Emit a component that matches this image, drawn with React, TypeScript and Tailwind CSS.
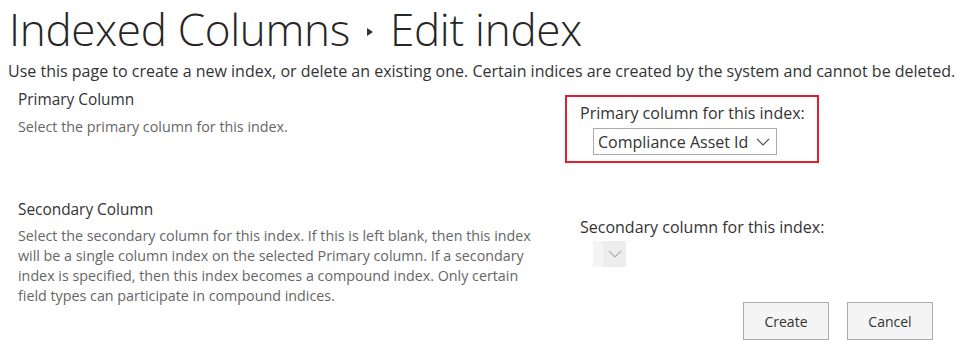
import React from "react";

const font = { fontFamily: '"Open Sans", "Noto Sans", sans-serif' };

function Chevron({ className = "" }: { className?: string }) {
  return (
    <svg width="14" height="8" viewBox="0 0 14 8" className={className}>
      <path d="M1 1 L7 7 L13 1" fill="none" stroke="currentColor" strokeWidth="1.1" />
    </svg>
  );
}

export default function App() {
  return (
    <div className="w-[969px] h-[359px] bg-white text-[#333] overflow-hidden" style={font}>
      <h1 className="pl-[9px] pt-[2px] h-[56px] text-[44px] leading-[56px] font-light text-[#262626] tracking-[-0.3px] flex items-center whitespace-nowrap">
        <span>Indexed Columns</span>
        <svg width="8" height="10" viewBox="0 0 8 10" className="mx-[16px] mt-[6px]">
          <path d="M1 1 L7 5 L1 9 Z" fill="#333" />
        </svg>
        <span>Edit index</span>
      </h1>
      <p className="pl-[8px] pt-[3px] text-[16px] leading-[24px] text-[#333] whitespace-nowrap">
        Use this page to create a new index, or delete an existing one. Certain indices are created by the system and cannot be deleted.
      </p>
      <div className="flex pl-[18px]">
        <div className="w-[547px]">
          <div className="pt-[6px] text-[15.4px] leading-[22px] text-[#333]">Primary Column</div>
          <div className="mt-[6px] text-[14.3px] leading-[20px] text-[#666]">Select the primary column for this index.</div>
          <div className="mt-[62px] text-[15.4px] leading-[22px] text-[#333]">Secondary Column</div>
          <div className="mt-[5px] w-[522px] text-[14.3px] leading-[20px] text-[#666]">
            Select the secondary column for this index. If this is left blank, then this index will be a single column index on the selected Primary column. If a secondary index is specified, then this index becomes a compound index. Only certain field types can participate in compound indices.
          </div>
        </div>
        <div className="flex flex-col">
          <div className="mt-[12px] w-[254px] h-[68px] border-2 border-[#e0202e] pl-[13px] pt-[6px]">
            <div className="text-[16px] leading-[20px] text-[#333] whitespace-nowrap">Primary column for this index:</div>
            <div className="ml-[13px] mt-[5px] w-[184px] h-[27px] border border-[#ababab] flex items-center justify-between pl-[4px] pr-[6px] text-[16px] text-[#333]">
              <span>Compliance Asset Id</span>
              <Chevron className="text-[#555]" />
            </div>
          </div>
          <div className="mt-[54px] pl-[15px] text-[16px] leading-[20px] text-[#333] whitespace-nowrap">Secondary column for this index:</div>
          <div className="ml-[28px] mt-[4px] w-[33px] h-[26px] bg-[#ededed] flex">
            <div className="w-[10px] h-full bg-[#f4f4f4]" />
            <div className="flex-1 flex items-center justify-center">
              <Chevron className="text-[#b0b0b0]" />
            </div>
          </div>
          <div className="mt-[35px] flex gap-[18px] pl-[178px]">
            <button className="w-[86px] h-[38px] border border-[#ababab] bg-[#f4f4f4] text-[14px] text-[#333]">Create</button>
            <button className="w-[86px] h-[38px] border border-[#ababab] bg-[#f4f4f4] text-[14px] text-[#333]">Cancel</button>
          </div>
        </div>
      </div>
    </div>
  );
}
